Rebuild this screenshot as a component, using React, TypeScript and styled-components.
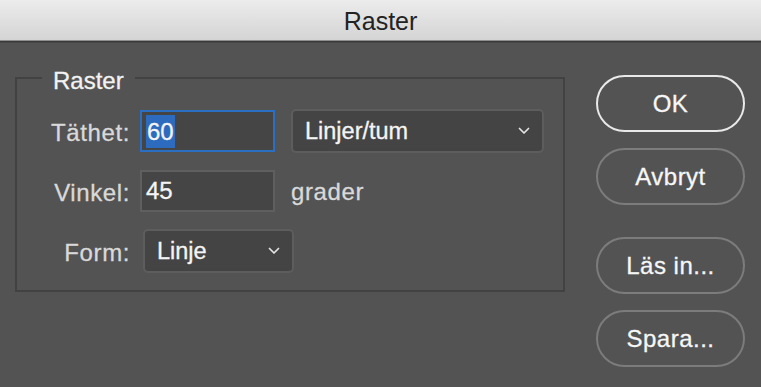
import React from "react";
import styled, { createGlobalStyle } from "styled-components";

const Global = createGlobalStyle`
  html, body { margin: 0; padding: 0; background: #535353; }
  body { font-family: "Liberation Sans", Arial, sans-serif; overflow: hidden; }
  * { box-sizing: border-box; }
`;

const Window = styled.div`
  width: 761px;
  height: 387px;
  display: flex;
  flex-direction: column;
  background: #535353;
`;

const TitleBar = styled.div`
  height: 41px;
  flex: none;
  display: flex;
  align-items: center;
  justify-content: center;
  background: linear-gradient(#ececec, #d4d4d4);
  border-bottom: 1px solid #8f8f8f;
  font-size: 25px;
  color: #232323;
  padding-top: 2px;
`;

const Body = styled.div`
  flex: 1;
  display: flex;
  align-items: flex-start;
  padding: 20px 16px 0 15px;
  gap: 31px;
  box-shadow: inset 0 1px 0 #3a3a3a, inset 0 2px 0 #474747;
  -webkit-text-stroke: 0.3px currentColor;
`;

const Group = styled.fieldset`
  width: 550px;
  margin: 0;
  padding: 0 0 17px 0;
  border: 2px solid #424242;
  min-width: 0;
`;

const Legend = styled.legend`
  margin-left: 25px;
  padding: 6px 11px 0;
  font-size: 24px;
  line-height: 28px;
  color: #f2f2f2;
`;

const Grid = styled.div`
  display: grid;
  grid-template-columns: 113px 135px auto;
  column-gap: 10px;
  row-gap: 17px;
  align-items: center;
  justify-content: start;
  padding-top: 14px;
`;

const Label = styled.div`
  text-align: right;
  font-size: 24px;
  line-height: 28px;
  letter-spacing: 0.6px;
  color: #d9d9d9;
  padding-top: 3px;
`;

const Field = styled.div<{ $focused?: boolean }>`
  width: 135px;
  height: 42px;
  display: flex;
  align-items: center;
  padding-left: 4px;
  background: #454545;
  border: 2px solid ${(p) => (p.$focused ? "#2b6fc2" : "#5f5f5f")};
  font-size: 24px;
  color: #f4f4f4;
`;

const Selected = styled.span`
  background: #2c6bbd;
  line-height: 33px;
  padding: 0 1px;
`;

const Select = styled.div<{ $width: number; $shift: number; $span?: boolean }>`
  width: ${(p) => p.$width}px;
  height: 44px;
  margin-left: ${(p) => p.$shift}px;
  grid-column: ${(p) => (p.$span ? "2 / span 2" : "auto")};
  justify-self: start;
  display: flex;
  align-items: center;
  justify-content: space-between;
  padding: 0 12px 0 12px;
  background: #444444;
  border: 2px solid #5d5d5d;
  border-radius: 5px;
  font-size: 23.5px;
  color: #f4f4f4;
`;

const Unit = styled.div`
  font-size: 24px;
  letter-spacing: 0.6px;
  color: #d9d9d9;
  padding-left: 6px;
  padding-top: 2px;
`;

const Buttons = styled.div`
  width: 149px;
  display: flex;
  flex-direction: column;
  padding-top: 14px;
`;

const Button = styled.div<{ $primary?: boolean; $gapBefore?: number }>`
  height: 57px;
  margin-top: ${(p) => p.$gapBefore ?? 0}px;
  display: flex;
  align-items: center;
  justify-content: center;
  border-radius: 29px;
  border: 2px solid ${(p) => (p.$primary ? "#e9e9e9" : "#7c7c7c")};
  font-size: 24px;
  letter-spacing: 0.5px;
  color: #f6f6f6;
`;

const Chevron = () => (
  <svg width="12" height="8" viewBox="0 0 12 8">
    <polyline points="1.5,1.5 6,6 10.5,1.5" fill="none" stroke="#e4e4e4" strokeWidth="1.7" strokeLinecap="round" strokeLinejoin="round" />
  </svg>
);

export default function App() {
  return (
    <Window>
      <Global />
      <TitleBar>Raster</TitleBar>
      <Body>
        <Group>
          <Legend>Raster</Legend>
          <Grid>
            <Label>Täthet:</Label>
            <Field $focused>
              <Selected>60</Selected>
            </Field>
            <Select $width={253} $shift={6}>
              Linjer/tum
              <Chevron />
            </Select>

            <Label>Vinkel:</Label>
            <Field>45</Field>
            <Unit>grader</Unit>

            <Label>Form:</Label>
            <Select $width={151} $shift={3} $span>
              Linje
              <Chevron />
            </Select>
          </Grid>
        </Group>
        <Buttons>
          <Button $primary>OK</Button>
          <Button $gapBefore={16}>Avbryt</Button>
          <Button $gapBefore={32}>Läs in...</Button>
          <Button $gapBefore={16}>Spara...</Button>
        </Buttons>
      </Body>
    </Window>
  );
}
